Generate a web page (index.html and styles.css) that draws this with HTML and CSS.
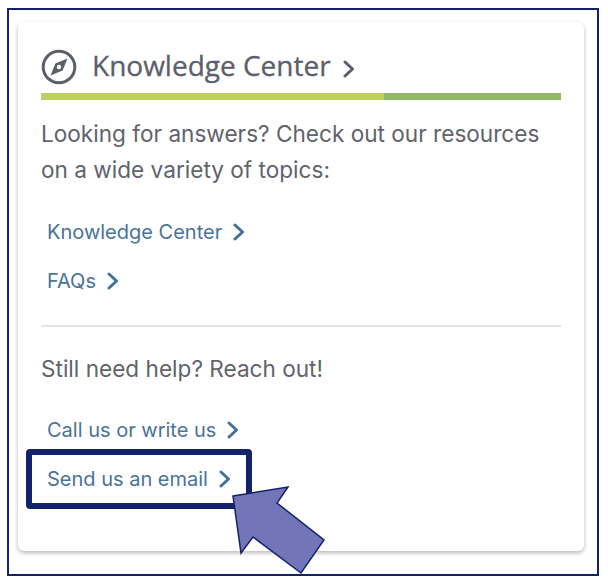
FILE: index.html
```html
<!DOCTYPE html>
<html lang="en">
<head>
    <meta charset="UTF-8">
    <meta name="viewport" content="width=device-width, initial-scale=1.0">
    <title>Knowledge Center</title>
    <link rel="stylesheet" href="styles.css">
</head>
<body>
    <div class="frame">
        <div class="card">
            <div class="card-title">
                <svg class="compass" viewBox="0 0 36 36" width="36" height="36">
                    <circle cx="18" cy="18" r="15.8" fill="none" stroke="#5b6068" stroke-width="3"/>
                    <path d="M26.5 9.5 L21.6 21.6 L9.5 26.5 L14.4 14.4 Z M18 15.8 A2.2 2.2 0 1 0 18 20.2 A2.2 2.2 0 1 0 18 15.8 Z" fill="#5b6068" fill-rule="evenodd"/>
                </svg>
                <h2>Knowledge Center</h2>
                <svg class="chev title-chev" viewBox="0 0 12 18" width="12" height="18"><path d="M2 2 L9.5 9 L2 16"/></svg>
            </div>
            <div class="rule"><span class="rule-light"></span><span class="rule-dark"></span></div>
            <p class="intro">Looking for answers? Check out our resources on a wide variety of topics:</p>
            <ul class="links">
                <li><a href="#">Knowledge Center <svg class="chev" viewBox="0 0 12 18" width="12" height="18"><path d="M2 2 L9.5 9 L2 16"/></svg></a></li>
                <li><a href="#">FAQs <svg class="chev" viewBox="0 0 12 18" width="12" height="18"><path d="M2 2 L9.5 9 L2 16"/></svg></a></li>
            </ul>
            <hr class="divider">
            <p class="help">Still need help? Reach out!</p>
            <ul class="links links-help">
                <li><a href="#">Call us or write us <svg class="chev" viewBox="0 0 12 18" width="12" height="18"><path d="M2 2 L9.5 9 L2 16"/></svg></a></li>
                <li><a href="#">Send us an email <svg class="chev" viewBox="0 0 12 18" width="12" height="18"><path d="M2 2 L9.5 9 L2 16"/></svg></a></li>
            </ul>
        </div>
        <div class="highlight"></div>
        <svg class="pointer" viewBox="0 0 608 584" width="608" height="584">
            <path d="M233 496 L288 487 L277 503 L324 540 L301 573 L253 537 L241 553 Z" fill="#7276b8" stroke="#14216b" stroke-width="1.5"/>
        </svg>
    </div>
</body>
</html>
```

FILE: styles.css
```css
body { margin: 0; width: 608px; height: 584px; background: #fff; font-family: "Inter", "Liberation Sans", sans-serif; overflow: hidden; }
.frame { box-sizing: border-box; position: relative; width: 592px; height: 568px; margin: 8px 0 0 7px; padding: 12px 13px 12px 9px; border: 2px solid #14216b; }
.card { box-sizing: border-box; height: 529px; padding: 24px 23px; background: #fff; border-radius: 6px; box-shadow: 0 2px 4px rgba(0,0,0,.28); }
.card-title { display: flex; align-items: center; height: 42px; }
.card-title h2 { margin: 0 0 5px 15px; font: 400 28px "Open Sans", sans-serif; color: #5b6068; -webkit-text-stroke: .3px #5b6068; }
.chev { fill: none; stroke: #41719b; stroke-width: 3; stroke-linecap: round; stroke-linejoin: round; vertical-align: -2px; margin-left: 5px; }
.title-chev { margin: 3px 0 0 12px; stroke: #5b6068; }
.rule { display: flex; height: 7px; margin-top: 5px; }
.rule-light { width: 343px; background: #bed062; }
.rule-dark { flex: 1; background: #8fb964; }
.intro, .help { margin: 0; font-size: 22.6px; line-height: 36px; color: #5f636b; }
.intro { margin-top: 16px; }
.links { list-style: none; margin: 28px 0 0; padding: 0 0 0 6px; }
.links li { height: 49px; line-height: 32px; font-size: 20px; }
.links a { color: #4a7399; text-decoration: none; }
.divider { margin: 11px 0 0; border: 0; border-top: 2px solid #e4e4e4; }
.help { margin-top: 24px; }
.links-help { margin-top: 27px; }
.highlight { box-sizing: border-box; position: absolute; left: 17px; top: 439px; width: 226px; height: 60px; border: 6px solid #14216b; border-radius: 4px; }
.pointer { position: absolute; left: -9px; top: -10px; }
```
